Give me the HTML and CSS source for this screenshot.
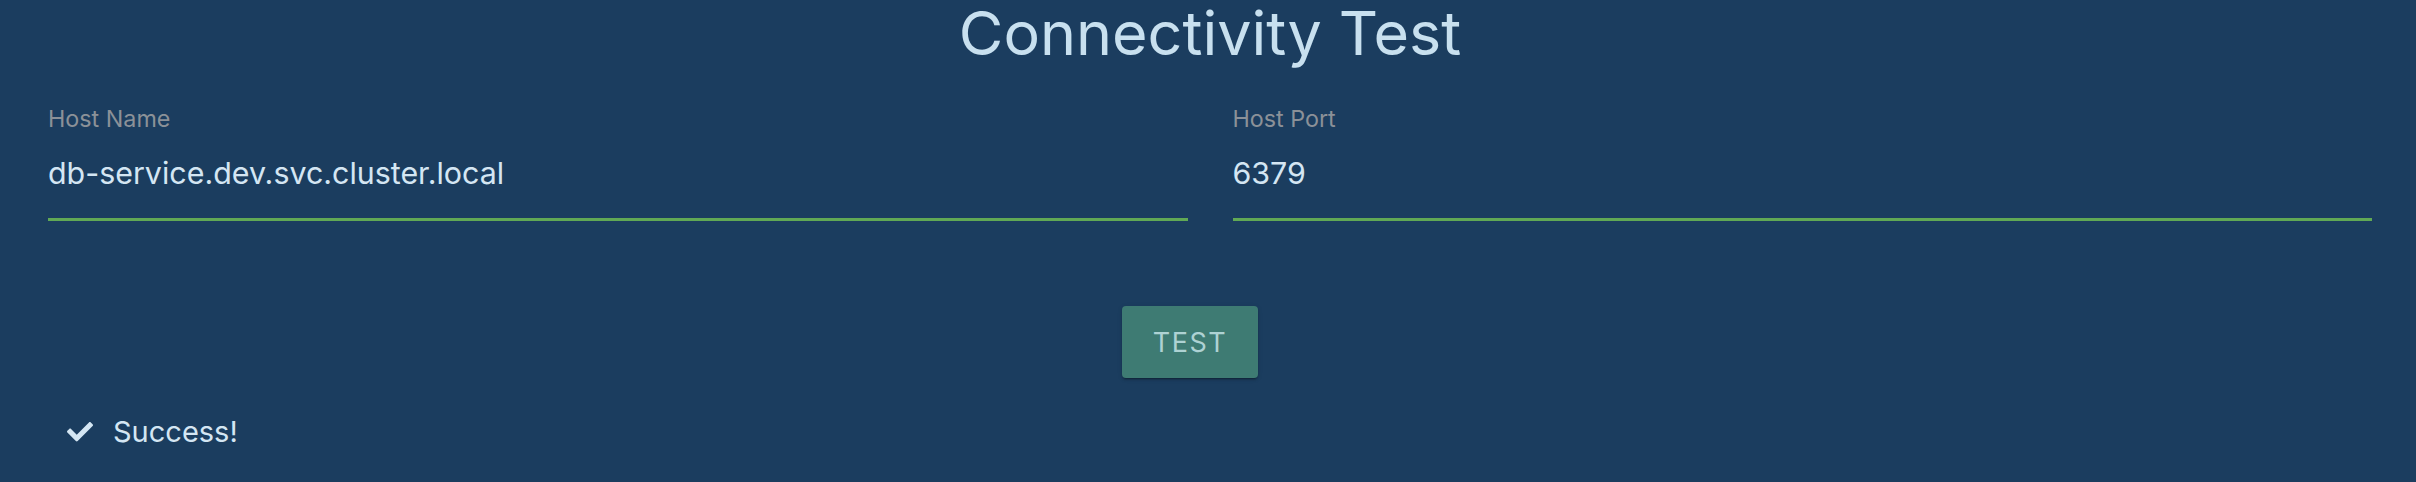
FILE: index.html
```html
<!DOCTYPE html>
<html lang="en">
<head>
<meta charset="utf-8">
<title>Connectivity Test</title>
<link rel="stylesheet" href="styles.css">
</head>
<body>
<main class="page">
  <h1 class="title">Connectivity Test</h1>
  <div class="fields">
    <label class="field">
      <span class="field-label">Host Name</span>
      <span class="field-value">db-service.dev.svc.cluster.local</span>
    </label>
    <label class="field">
      <span class="field-label">Host Port</span>
      <span class="field-value">6379</span>
    </label>
  </div>
  <div class="actions">
    <button class="btn" type="button">TEST</button>
  </div>
  <div class="result">
    <svg class="check" viewBox="0 64 512 384" aria-hidden="true"><path d="M173.898 439.404l-166.4-166.4c-9.997-9.997-9.997-26.206 0-36.204l36.203-36.204c9.997-9.998 26.207-9.998 36.204 0L192 312.69 432.095 72.596c9.997-9.997 26.207-9.997 36.204 0l36.203 36.204c9.997 9.997 9.997 26.206 0 36.204l-294.4 294.401c-9.998 9.997-26.207 9.997-36.204-.001z"/></svg>
    <span class="result-text">Success!</span>
  </div>
</main>
</body>
</html>
```

FILE: styles.css
```css
html, body {
  margin: 0;
  padding: 0;
  background: #1b3d5f;
}
body {
  font-family: Inter, "Liberation Sans", sans-serif;
  color: #d4e6f3;
  height: 482px;
  overflow: hidden;
}
.page {
  padding: 0 44px 0 48px;
}
.title {
  margin: 0;
  font-size: 61px;
  font-weight: 400;
  line-height: 67px;
  text-align: center;
  color: #c8e0ef;
}
.fields {
  display: flex;
  gap: 45px;
  margin-top: 39px;
}
.field {
  flex: 1;
  display: flex;
  flex-direction: column;
  border-bottom: 3px solid #61a955;
  padding-bottom: 28px;
}
.field-label {
  font-size: 23.3px;
  line-height: 26px;
  color: #8b9198;
}
.field-value {
  margin-top: 24px;
  font-size: 30.4px;
  line-height: 34px;
  color: #d4e6f3;
}
.actions {
  display: flex;
  justify-content: center;
  padding-right: 40px;
  margin-top: 85px;
}
.btn {
  width: 136px;
  height: 72px;
  border: none;
  border-radius: 4px;
  background: #3e7b73;
  color: #aed2d3;
  font-family: Inter, "Liberation Sans", sans-serif;
  font-size: 27px;
  letter-spacing: 1.5px;
  box-shadow: 0 3px 1px -2px rgba(0,0,0,.2), 0 2px 2px 0 rgba(0,0,0,.14), 0 1px 5px 0 rgba(0,0,0,.12);
  padding: 0;
}
.result {
  display: flex;
  align-items: center;
  margin-top: 34px;
  padding-left: 19px;
  height: 40px;
}
.check {
  width: 26px;
  height: 19.5px;
  fill: #d4e6f3;
  margin-right: 20px;
}
.result-text {
  font-size: 29px;
  line-height: 40px;
  color: #d4e6f3;
}
```
